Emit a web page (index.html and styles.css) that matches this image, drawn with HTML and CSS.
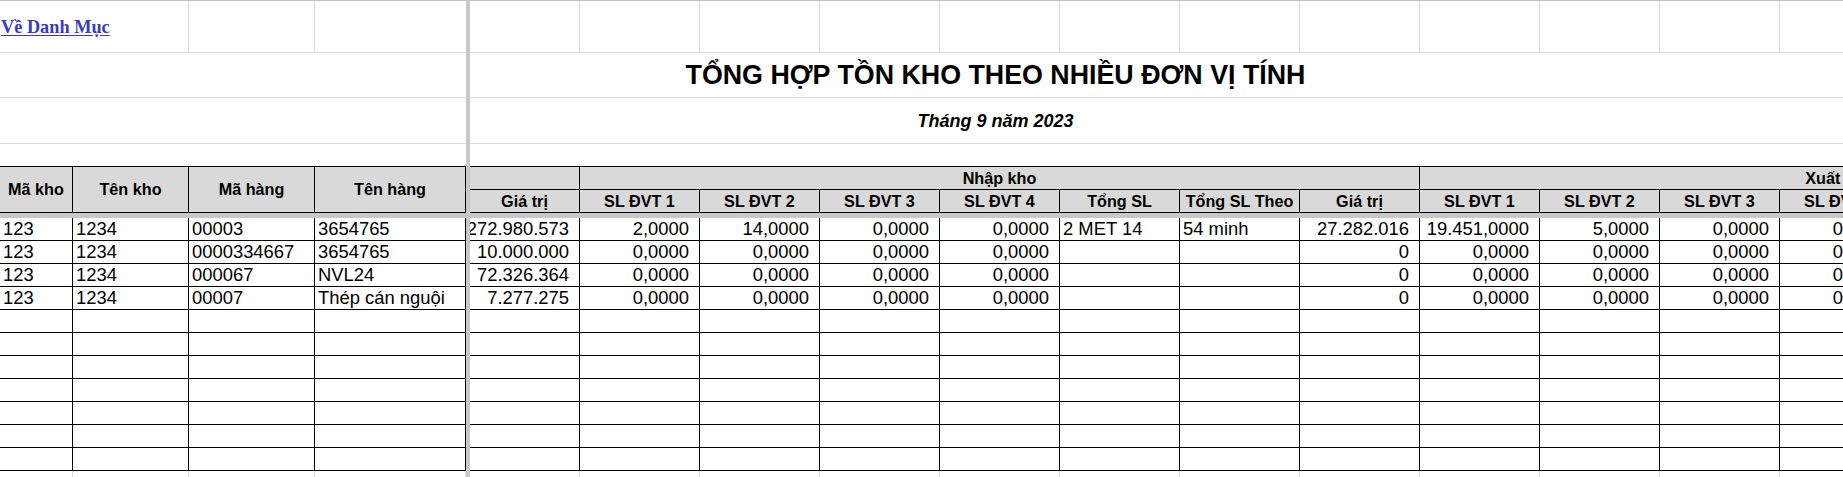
FILE: index.html
```html
<!DOCTYPE html>
<html lang="vi">
<head>
<meta charset="utf-8">
<title>Tổng hợp tồn kho theo nhiều đơn vị tính</title>
<link rel="stylesheet" href="styles.css">
</head>
<body>
<div class="sheet">
  <div class="row top">
    <div class="linkcell"><a class="back" href="#">Về Danh Mục</a></div>
    <div></div><div class="noright"></div>
    <div class="div"></div>
    <div></div><div></div><div></div><div></div><div></div><div></div><div></div><div></div><div></div><div></div><div></div><div></div><div></div><div></div><div></div>
  </div>
  <div class="row band title-row">
    <div class="left"></div>
    <div class="div"></div>
    <div class="right"><div class="centerbox"><h1 class="title">TỔNG HỢP TỒN KHO THEO NHIỀU ĐƠN VỊ TÍNH</h1></div></div>
  </div>
  <div class="row band sub-row">
    <div class="left"></div>
    <div class="div"></div>
    <div class="right"><div class="centerbox"><p class="subtitle">Tháng 9 năm 2023</p></div></div>
  </div>
  <div class="row band gap-row">
    <div class="left"></div>
    <div class="div"></div>
    <div class="right"></div>
  </div>
  <div class="row head">
    <div class="h tall">Mã kho</div>
    <div class="h tall">Tên kho</div>
    <div class="h tall">Mã hàng</div>
    <div class="h tall">Tên hàng</div>
    <div class="div tall"></div>
    <div class="h"></div>
    <div class="h span7">Nhập kho</div>
    <div class="h span7">Xuất kho</div>
    <div class="h">Giá trị</div>
    <div class="h">SL ĐVT 1</div>
    <div class="h">SL ĐVT 2</div>
    <div class="h">SL ĐVT 3</div>
    <div class="h">SL ĐVT 4</div>
    <div class="h">Tổng SL</div>
    <div class="h">Tổng SL Theo</div>
    <div class="h">Giá trị</div>
    <div class="h">SL ĐVT 1</div>
    <div class="h">SL ĐVT 2</div>
    <div class="h">SL ĐVT 3</div>
    <div class="h">SL ĐVT 4</div>
    <div class="h">Tổng SL</div>
    <div class="h">Tổng SL Theo</div>
    <div class="h">Giá trị</div>
  </div>
  <div class="freeze"></div>
  <div class="row data">
    <div class="l">123</div><div class="l">1234</div><div class="l">00003</div><div class="l">3654765</div>
    <div class="div"></div>
    <div class="r">272.980.573</div>
    <div class="r">2,0000</div><div class="r">14,0000</div><div class="r">0,0000</div><div class="r">0,0000</div>
    <div class="l">2 MET 14</div><div class="l">54 minh</div><div class="r">27.282.016</div>
    <div class="r">19.451,0000</div><div class="r">5,0000</div><div class="r">0,0000</div><div class="r">0,0000</div>
    <div></div><div></div><div></div>
  </div>
  <div class="row data">
    <div class="l">123</div><div class="l">1234</div><div class="l">0000334667</div><div class="l">3654765</div>
    <div class="div"></div>
    <div class="r">10.000.000</div>
    <div class="r">0,0000</div><div class="r">0,0000</div><div class="r">0,0000</div><div class="r">0,0000</div>
    <div></div><div></div><div class="r">0</div>
    <div class="r">0,0000</div><div class="r">0,0000</div><div class="r">0,0000</div><div class="r">0,0000</div>
    <div></div><div></div><div></div>
  </div>
  <div class="row data">
    <div class="l">123</div><div class="l">1234</div><div class="l">000067</div><div class="l">NVL24</div>
    <div class="div"></div>
    <div class="r">72.326.364</div>
    <div class="r">0,0000</div><div class="r">0,0000</div><div class="r">0,0000</div><div class="r">0,0000</div>
    <div></div><div></div><div class="r">0</div>
    <div class="r">0,0000</div><div class="r">0,0000</div><div class="r">0,0000</div><div class="r">0,0000</div>
    <div></div><div></div><div></div>
  </div>
  <div class="row data">
    <div class="l">123</div><div class="l">1234</div><div class="l">00007</div><div class="l">Thép cán nguội</div>
    <div class="div"></div>
    <div class="r">7.277.275</div>
    <div class="r">0,0000</div><div class="r">0,0000</div><div class="r">0,0000</div><div class="r">0,0000</div>
    <div></div><div></div><div class="r">0</div>
    <div class="r">0,0000</div><div class="r">0,0000</div><div class="r">0,0000</div><div class="r">0,0000</div>
    <div></div><div></div><div></div>
  </div>
  <div class="row data"><div></div><div></div><div></div><div></div><div class="div"></div><div></div><div></div><div></div><div></div><div></div><div></div><div></div><div></div><div></div><div></div><div></div><div></div><div></div><div></div><div></div></div>
  <div class="row data"><div></div><div></div><div></div><div></div><div class="div"></div><div></div><div></div><div></div><div></div><div></div><div></div><div></div><div></div><div></div><div></div><div></div><div></div><div></div><div></div><div></div></div>
  <div class="row data"><div></div><div></div><div></div><div></div><div class="div"></div><div></div><div></div><div></div><div></div><div></div><div></div><div></div><div></div><div></div><div></div><div></div><div></div><div></div><div></div><div></div></div>
  <div class="row data"><div></div><div></div><div></div><div></div><div class="div"></div><div></div><div></div><div></div><div></div><div></div><div></div><div></div><div></div><div></div><div></div><div></div><div></div><div></div><div></div><div></div></div>
  <div class="row data"><div></div><div></div><div></div><div></div><div class="div"></div><div></div><div></div><div></div><div></div><div></div><div></div><div></div><div></div><div></div><div></div><div></div><div></div><div></div><div></div><div></div></div>
  <div class="row data"><div></div><div></div><div></div><div></div><div class="div"></div><div></div><div></div><div></div><div></div><div></div><div></div><div></div><div></div><div></div><div></div><div></div><div></div><div></div><div></div><div></div></div>
  <div class="row data"><div></div><div></div><div></div><div></div><div class="div"></div><div></div><div></div><div></div><div></div><div></div><div></div><div></div><div></div><div></div><div></div><div></div><div></div><div></div><div></div><div></div></div>
  <div class="row grid"><div></div><div></div><div></div><div></div><div class="div"></div><div></div><div></div><div></div><div></div><div></div><div></div><div></div><div></div><div></div><div></div><div></div><div></div><div></div><div></div><div></div></div>
</div>
</body>
</html>
```

FILE: styles.css
```css
html, body {
  margin: 0;
  padding: 0;
  background: #ffffff;
}
body {
  width: 1843px;
  height: 477px;
  overflow: hidden;
}
.sheet {
  width: 2260px;
  border-top: 1px solid #c4c4c4;
  font-family: "Liberation Sans", Arial, sans-serif;
  color: #000;
}
.row {
  display: grid;
  grid-template-columns: 73px 116px 126px 151px 4px 110px repeat(14, 120px);
}
.row > div {
  box-sizing: border-box;
  min-width: 0;
  overflow: hidden;
  white-space: nowrap;
}
.row > .div {
  background: #c8c8c8;
  border: 0;
}

/* row 1 */
.top { height: 52px; }
.top > div {
  border-right: 1px solid #dcdcdc;
  border-bottom: 1px solid #dcdcdc;
}
.top > .noright { border-right: 0; }
.top > .linkcell {
  grid-column: span 2;
  display: flex;
  align-items: center;
  padding-left: 1px;
  padding-top: 1px;
}
.back {
  font-family: "Liberation Serif", "Times New Roman", serif;
  font-weight: bold;
  font-size: 18.3px;
  color: #3a3ac8;
  text-decoration: underline;
  text-underline-offset: 2px;
}

/* title bands */
.band .left { grid-column: span 4; }
.band .right { grid-column: span 15; }
.band > .left, .band > .right { border-bottom: 1px solid #dcdcdc; }
.title-row { height: 45px; }
.sub-row { height: 46px; }
.gap-row { height: 23px; }
.gap-row > .left, .gap-row > .right { border-bottom: 1px solid #000; }
.centerbox {
  width: 1051px;
  height: 100%;
  display: flex;
  align-items: center;
  justify-content: center;
}
.title {
  margin: 0;
  font-size: 26.8px;
  font-weight: bold;
  line-height: 1;
  padding-top: 1px;
}
.subtitle {
  margin: 0;
  font-size: 18px;
  font-weight: bold;
  font-style: italic;
  line-height: 1;
}

/* header */
.head {
  grid-template-rows: 23px 23px;
}
.head > .h {
  background: #d9d9d9;
  border-right: 1px solid #000;
  border-bottom: 1px solid #000;
  display: flex;
  align-items: center;
  justify-content: center;
  font-weight: bold;
  font-size: 16.2px;
}
.head > .tall { grid-row: span 2; }
.head > .span7 { grid-column: span 7; }

.freeze {
  height: 5px;
  background: #c8c8c8;
}

/* data */
.data { height: 23px; }
.data > div {
  border-right: 1px solid #000;
  border-bottom: 1px solid #000;
  font-size: 18.4px;
  line-height: 22px;
}
.data > .l { padding-left: 3px; }
.data > .r {
  display: flex;
  justify-content: flex-end;
  padding-right: 10px;
}
.grid { height: 23px; }
.grid > div {
  border-right: 1px solid #dcdcdc;
  border-bottom: 1px solid #dcdcdc;
}
```
